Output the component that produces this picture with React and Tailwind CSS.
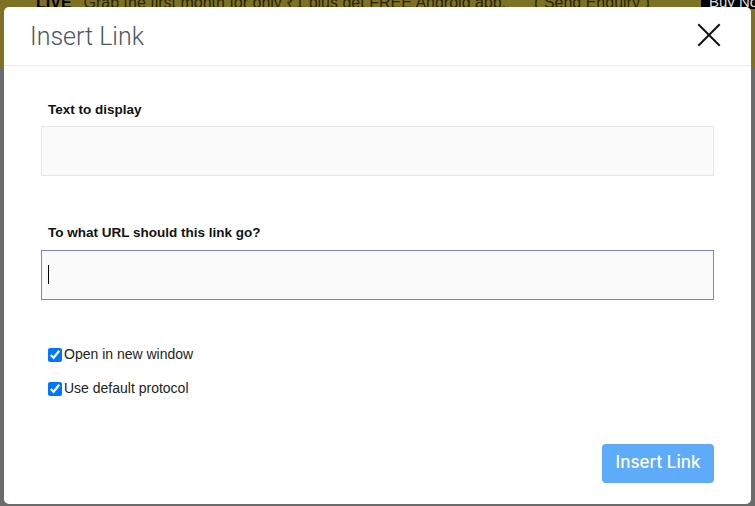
import React from 'react'

const CloseIcon = () => (
  <svg width="24" height="24" viewBox="0 0 24 24" fill="none" stroke="#111" strokeWidth="2" strokeLinecap="square">
    <path d="M2 2 L22 22 M22 2 L2 22" />
  </svg>
)

const Field = ({ label, focused = false }) => (
  <div className="flex flex-col">
    <label className="pl-[7px] text-[13.5px] font-bold text-[#111]">{label}</label>
    <div
      className={`mt-[6px] h-[50px] bg-[#fafafa] border flex items-center pl-[6px] ${
        focused ? 'border-[#7b84c6]' : 'border-[#e6e6e6]'
      }`}
    >
      {focused && <span className="block w-px h-[19px] bg-black" />}
    </div>
  </div>
)

const Check = ({ label }) => (
  <label className="flex items-center text-[14px] text-[#222] h-[16px]">
    <input type="checkbox" defaultChecked className="w-[14px] h-[14px] m-0 mr-[2px] accent-[#0075ff]" />
    {label}
  </label>
)

export default function App() {
  return (
    <div className="relative w-[755px] h-[506px] overflow-hidden bg-[#6b6b6b]" style={{ fontFamily: '"Liberation Sans", Arial, sans-serif' }}>
      <div className="h-[68px] bg-[#7f7124] flex items-start justify-between">
        <div className="-mt-[9px] flex gap-3 pl-[36px] text-[16px] text-[#2a2406] whitespace-nowrap">
          <span className="font-bold text-black">LIVE</span>
          <span>Grab the first month for only ₹1 plus get FREE Android app.</span>
          <span className="ml-4">( Send Enquiry )</span>
        </div>
        <div className="-mt-[9px] h-[18px] w-[54px] bg-black text-[#ddd] text-[15px] pl-2 whitespace-nowrap">Buy Now</div>
      </div>

      <div className="absolute left-[4px] top-[7px] w-[747px] h-[497px] bg-white rounded-[5px] flex flex-col">
        <div className="h-[59px] border-b border-[#e9ecef] flex items-center justify-between pl-[26px] pr-[30px]">
          <h2 className="text-[25px] text-[#4b5661] pt-[1px]" style={{ fontFamily: 'Roboto, sans-serif', fontWeight: 300 }}>
            Insert Link
          </h2>
          <button className="mt-[-2px]"><CloseIcon /></button>
        </div>

        <div className="flex-1 flex flex-col px-[37px] pt-[34px]">
          <Field label="Text to display" />
          <div className="h-[47px]" />
          <Field label="To what URL should this link go?" focused />
          <div className="mt-[47px] flex flex-col gap-[18px] pl-[7px]">
            <Check label="Open in new window" />
            <Check label="Use default protocol" />
          </div>
          <div className="flex justify-end mt-[47px]">
            <button
              className="h-[39px] w-[112px] rounded-[4px] bg-[#5eabf9] text-white text-[17px]"
              style={{ fontFamily: 'Inter, sans-serif', fontWeight: 500 }}
            >
              Insert Link
            </button>
          </div>
        </div>
      </div>
    </div>
  )
}
